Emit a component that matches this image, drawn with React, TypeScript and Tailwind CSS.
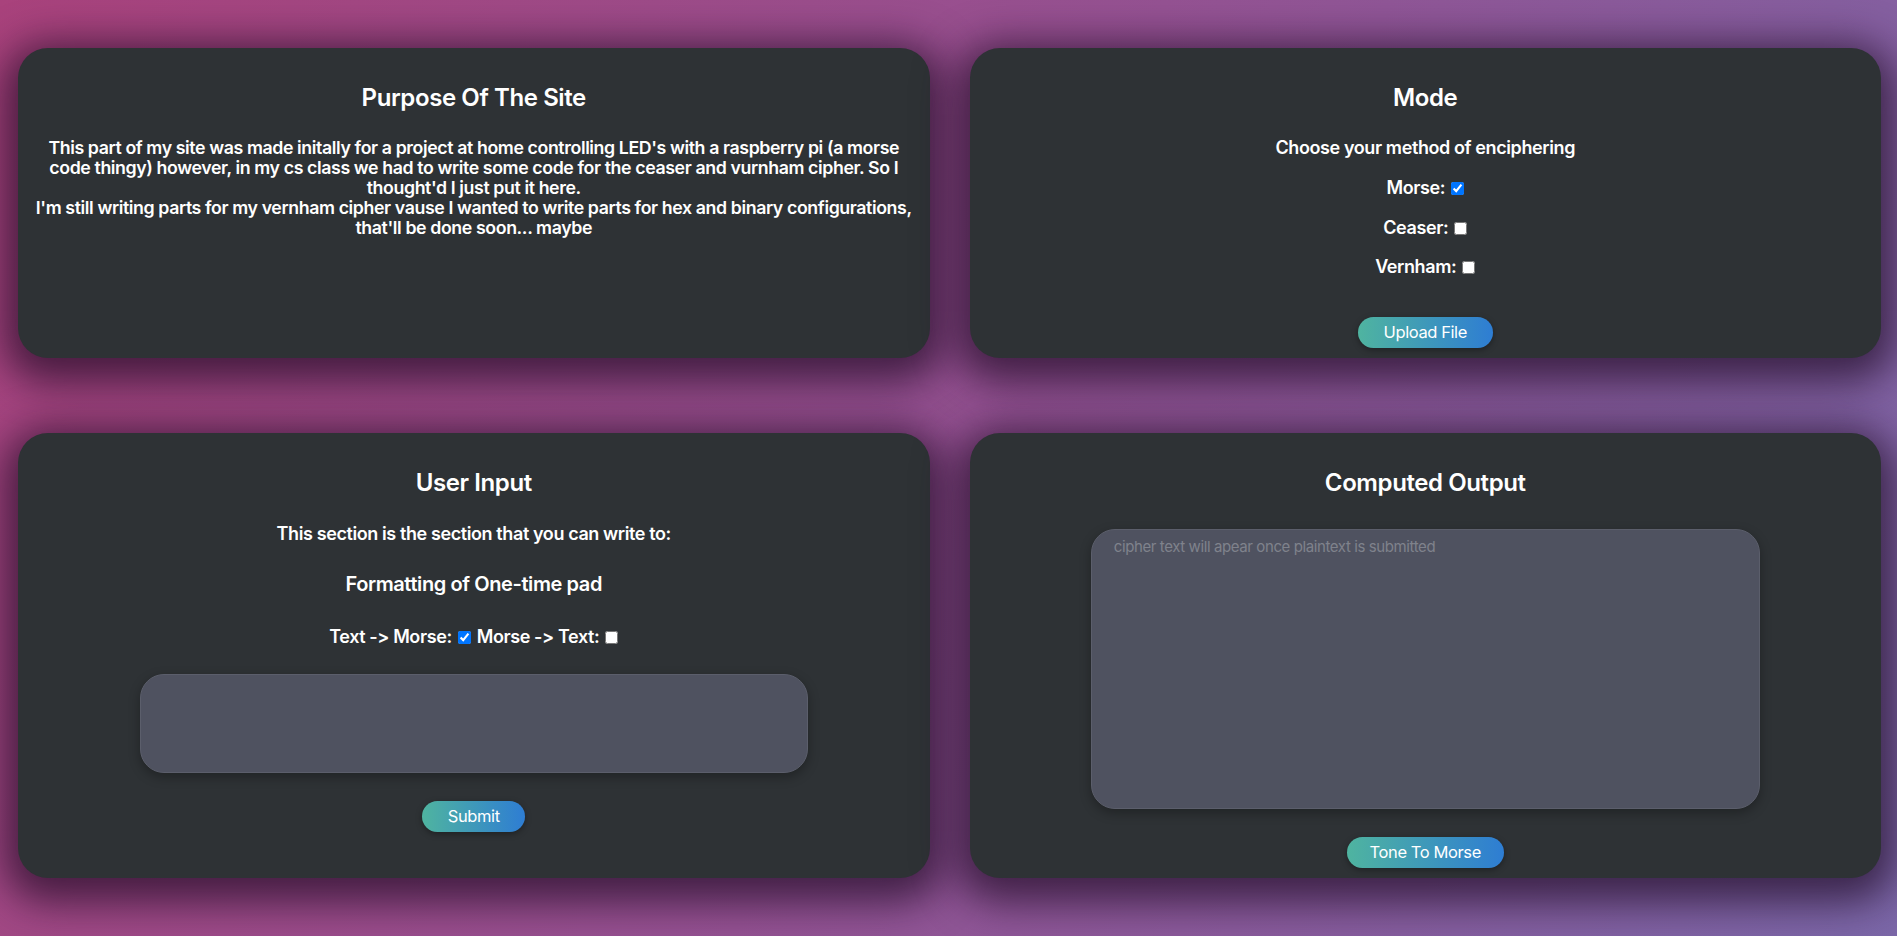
import React, { useState } from "react";

type BtnProps = { label: string; className?: string };

function GradientButton({ label, className = "" }: BtnProps) {
  return (
    <button
      type="button"
      className={
        "h-[31px] rounded-full bg-[linear-gradient(90deg,#4fb4a0,#2e7dd3)] text-white text-[16.5px] font-normal shadow-[0_2px_6px_rgba(0,0,0,0.35)] " +
        className
      }
    >
      {label}
    </button>
  );
}

function Card({ children }: { children: React.ReactNode }) {
  return (
    <div className="flex flex-col items-center rounded-[30px] bg-[#2e3235] px-4 pt-[34px] text-center text-white shadow-[0_10px_40px_14px_rgba(30,10,35,0.7)] overflow-hidden">
      {children}
    </div>
  );
}

function App() {
  const [mode, setMode] = useState({ morse: true, ceaser: false, vernham: false });
  const [dir, setDir] = useState({ textToMorse: true, morseToText: false });
  const [input, setInput] = useState("");

  return (
    <div className="h-[936px] w-full overflow-hidden bg-[linear-gradient(115deg,#a9427c_0%,#955293_50%,#7b67a8_100%)] pt-[48px] pl-[18px] pr-[16px] font-['Inter',sans-serif] tracking-tight">
      <div className="grid grid-cols-2 grid-rows-[310px_445px] gap-x-[40px] gap-y-[75px]">
        {/* purpose */}
        <Card>
          <h2 className="text-[24px] leading-[32px] font-semibold">Purpose Of The Site</h2>
          <p className="mt-[24px] text-[17.75px] leading-[20px] font-semibold">
            This part of my site was made initally for a project at home controlling LED's with a raspberry pi (a morse
            code thingy) however, in my cs class we had to write some code for the ceaser and vurnham cipher. So I
            thought'd I just put it here.
            <br />
            I'm still writing parts for my vernham cipher vause I wanted to write parts for hex and binary configurations,
            that'll be done soon... maybe
          </p>
        </Card>

        {/* mode */}
        <Card>
          <h2 className="text-[24px] leading-[32px] font-semibold">Mode</h2>
          <p className="mt-[24px] text-[18px] leading-[20px] font-semibold">Choose your method of enciphering</p>
          <label className="mt-[20px] flex items-center gap-[6px] text-[18px] leading-[20px] font-semibold">
            Morse:
            <input
              type="checkbox"
              checked={mode.morse}
              onChange={() => setMode({ ...mode, morse: !mode.morse })}
              className="h-[13px] w-[13px]"
            />
          </label>
          <label className="mt-[20px] flex items-center gap-[6px] text-[18px] leading-[20px] font-semibold">
            Ceaser:
            <input
              type="checkbox"
              checked={mode.ceaser}
              onChange={() => setMode({ ...mode, ceaser: !mode.ceaser })}
              className="h-[13px] w-[13px]"
            />
          </label>
          <label className="mt-[19px] flex items-center gap-[6px] text-[18px] leading-[20px] font-semibold">
            Vernham:
            <input
              type="checkbox"
              checked={mode.vernham}
              onChange={() => setMode({ ...mode, vernham: !mode.vernham })}
              className="h-[13px] w-[13px]"
            />
          </label>
          <GradientButton label="Upload File" className="mt-[40px] w-[135px]" />
        </Card>

        {/* user input */}
        <Card>
          <h2 className="text-[24px] leading-[32px] font-semibold">User Input</h2>
          <p className="mt-[25px] text-[18px] leading-[20px] font-semibold">This section is the section that you can write to:</p>
          <h3 className="mt-[28px] text-[20px] leading-[24px] font-semibold">Formatting of One-time pad</h3>
          <div className="mt-[31px] flex items-center gap-[6px] text-[18px] leading-[20px] font-semibold">
            <span>Text -&gt; Morse:</span>
            <input
              type="checkbox"
              checked={dir.textToMorse}
              onChange={() => setDir({ ...dir, textToMorse: !dir.textToMorse })}
              className="h-[13px] w-[13px]"
            />
            <span>Morse -&gt; Text:</span>
            <input
              type="checkbox"
              checked={dir.morseToText}
              onChange={() => setDir({ ...dir, morseToText: !dir.morseToText })}
              className="h-[13px] w-[13px]"
            />
          </div>
          <textarea
            value={input}
            onChange={(e) => setInput(e.target.value)}
            className="mt-[27px] h-[99px] w-[668px] resize-none rounded-[24px] border border-[#5b5e6b] bg-[#4f5260] px-5 py-2 text-[16px] text-white shadow-[0_4px_12px_rgba(0,0,0,0.3)] outline-none"
          />
          <GradientButton label="Submit" className="mt-[28px] w-[103px]" />
        </Card>

        {/* output */}
        <Card>
          <h2 className="text-[24px] leading-[32px] font-semibold">Computed Output</h2>
          <textarea
            readOnly
            placeholder="cipher text will apear once plaintext is submitted"
            className="mt-[30px] h-[280px] w-[669px] resize-none rounded-[24px] border border-[#5b5e6b] bg-[#4f5260] px-[22px] py-[6px] text-[15px] text-white placeholder-[#7f828c] shadow-[0_4px_12px_rgba(0,0,0,0.3)] outline-none"
          />
          <GradientButton label="Tone To Morse" className="mt-[28px] w-[157px]" />
        </Card>
      </div>
    </div>
  );
}

export default App;
